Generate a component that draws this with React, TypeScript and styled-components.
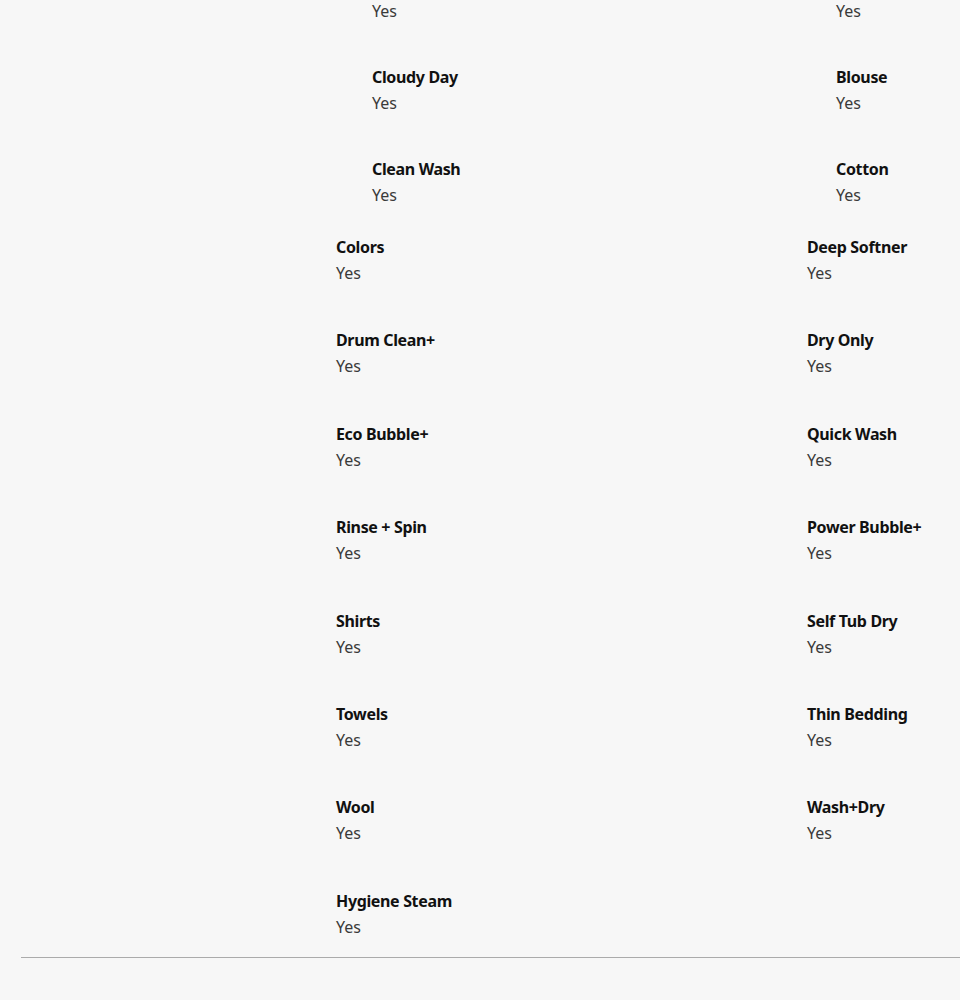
import React from 'react';
import styled, { createGlobalStyle } from 'styled-components';

const GlobalStyle = createGlobalStyle`
  html, body {
    margin: 0;
    padding: 0;
    background: #f7f7f7;
    font-family: 'Noto Sans', 'Open Sans', Arial, sans-serif;
    overflow: hidden;
  }
`;

// page is scrolled a little, first nested title sits above the fold
const Page = styled.div`
  width: 960px;
  min-height: 1000px;
  margin-top: -27px;
`;

const SpecList = styled.div`
  display: grid;
  grid-template-columns: 471px 1fr;
  row-gap: 41.4px;
  padding-left: 336px;
  padding-bottom: 17px;
`;

const SubList = styled.div`
  grid-column: 1 / -1;
  display: grid;
  grid-template-columns: 464px 1fr;
  row-gap: 41px;
  padding-left: 36px;
  margin-bottom: -15.4px;
`;

const Item = styled.div`
  display: flex;
  flex-direction: column;
`;

const Title = styled.p<{ $tight?: boolean }>`
  margin: 0;
  font-size: 16px;
  font-weight: 700;
  line-height: ${(p) => (p.$tight ? '25px' : '26px')};
  color: #111;
  letter-spacing: -0.35px;
`;

const Value = styled.p`
  margin: 0;
  font-size: 16px;
  font-weight: 400;
  line-height: 26px;
  color: #3a3a3a;
`;

const Divider = styled.hr`
  margin: 0 0 0 21px;
  border: none;
  border-top: 1px solid #ababab;
`;

const subSpecs = [
  ['Baby Care', 'Bedding'],
  ['Cloudy Day', 'Blouse'],
  ['Clean Wash', 'Cotton'],
];

const specs = [
  ['Colors', 'Deep Softner'],
  ['Drum Clean+', 'Dry Only'],
  ['Eco Bubble+', 'Quick Wash'],
  ['Rinse + Spin', 'Power Bubble+'],
  ['Shirts', 'Self Tub Dry'],
  ['Towels', 'Thin Bedding'],
  ['Wool', 'Wash+Dry'],
  ['Hygiene Steam'],
];

const App = () => {
  return (
    <>
      <GlobalStyle />
      <Page>
        <SpecList>
          <SubList>
            {subSpecs.flat().map((name) => (
              <Item key={`sub_${name}`}>
                <Title $tight>{name}</Title>
                <Value>Yes</Value>
              </Item>
            ))}
          </SubList>
          {specs.flat().map((name) => (
            <Item key={`spec_${name}`}>
              <Title>{name}</Title>
              <Value>Yes</Value>
            </Item>
          ))}
        </SpecList>
        <Divider />
      </Page>
    </>
  );
};

export default App;
